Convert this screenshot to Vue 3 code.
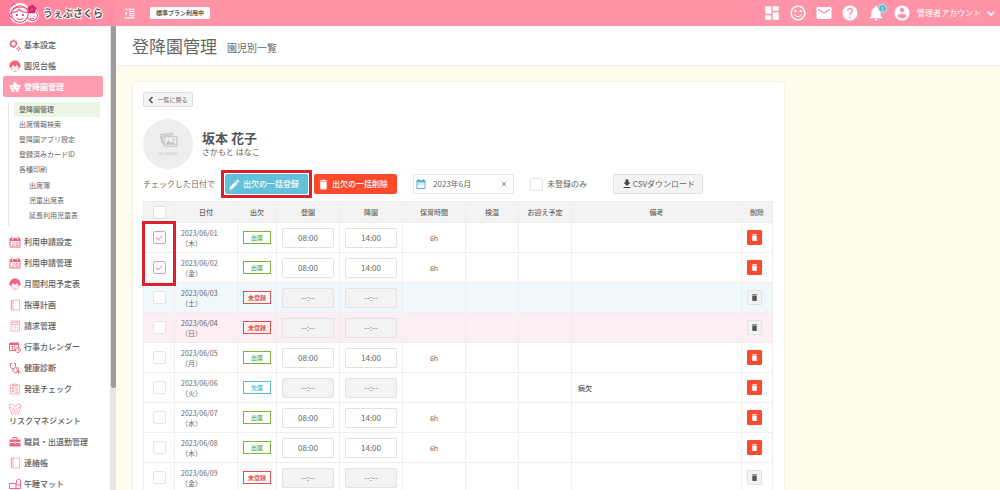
<script setup>
import { ref } from 'vue'

const mdi = {
  outdent: 'M11 17h10v-2H11v2zm-8-5l4 4V8l-4 4zm0 9h18v-2H3v2zM3 3v2h18V3H3zm8 6h10V7H11v2zm0 4h10v-2H11v2z',
  edit: 'M3 17.25V21h3.75L17.81 9.94l-3.75-3.75L3 17.25zM20.71 7.04c.39-.39.39-1.02 0-1.41l-2.34-2.34c-.39-.39-1.02-.39-1.41 0l-1.83 1.83 3.75 3.75 1.83-1.83z',
  trash: 'M6 19c0 1.1.9 2 2 2h8c1.1 0 2-.9 2-2V7H6v12zM19 4h-3.5l-1-1h-5l-1 1H5v2h14V4z',
  calendar: 'M9 11H7v2h2v-2zm4 0h-2v2h2v-2zm4 0h-2v2h2v-2zm2-7h-1V2h-2v2H8V2H6v2H5c-1.11 0-1.99.9-1.99 2L3 20c0 1.1.89 2 2 2h14c1.1 0 2-.9 2-2V6c0-1.1-.9-2-2-2zm0 16H5V9h14v11z',
  download: 'M19 9h-4V3H9v6H5l7 7 7-7zM5 18v2h14v-2H5z',
  account: 'M12 2C6.48 2 2 6.48 2 12s4.48 10 10 10 10-4.48 10-10S17.52 2 12 2zm0 3c1.66 0 3 1.34 3 3s-1.34 3-3 3-3-1.34-3-3 1.34-3 3-3zm0 14.2c-2.5 0-4.71-1.28-6-3.22.03-1.99 4-3.08 6-3.08 1.99 0 5.97 1.09 6 3.08-1.29 1.94-3.5 3.22-6 3.22z',
}

const actions = [
  { label: 'ダッシュボード', d: 'M3 13h8V3H3v10zm0 8h8v-6H3v6zm10 0h8V11h-8v10zm0-18v6h8V3h-8z' },
  { label: '園児', d: 'M11.99 2C6.47 2 2 6.48 2 12s4.47 10 9.99 10C17.52 22 22 17.52 22 12S17.52 2 11.99 2zM12 20c-4.42 0-8-3.58-8-8s3.58-8 8-8 8 3.58 8 8-3.58 8-8 8zm3.5-9c.83 0 1.5-.67 1.5-1.5S16.33 8 15.5 8 14 8.67 14 9.5s.67 1.5 1.5 1.5zm-7 0c.83 0 1.5-.67 1.5-1.5S9.33 8 8.5 8 7 8.67 7 9.5 7.67 11 8.5 11zm3.5 6.5c2.33 0 4.31-1.46 5.11-3.5H16c-.8 1.3-2.3 2.1-4 2.1S8.800 15.300 8 14H6.890c.8 2.040 2.780 3.500 5.110 3.500z' },
  { label: 'メール', d: 'M20 4H4c-1.1 0-1.99.9-1.99 2L2 18c0 1.1.9 2 2 2h16c1.1 0 2-.9 2-2V6c0-1.1-.9-2-2-2zm0 4l-8 5-8-5V6l8 5 8-5v2z' },
  { label: 'ヘルプ', d: 'M12 2C6.48 2 2 6.48 2 12s4.48 10 10 10 10-4.48 10-10S17.52 2 12 2zm1 17h-2v-2h2v2zm2.07-7.75l-.9.92C13.45 12.9 13 13.5 13 15h-2v-.5c0-1.1.45-2.1 1.17-2.83l1.24-1.26c.37-.36.59-.86.59-1.41 0-1.1-.9-2-2-2s-2 .9-2 2H8c0-2.21 1.790-4 4-4s4 1.790 4 4c0 .880-.360 1.680-.930 2.250z' },
  { label: 'お知らせ', badge: 1, d: 'M12 22c1.1 0 2-.9 2-2h-4c0 1.1.89 2 2 2zm6-6v-5c0-3.07-1.64-5.64-4.5-6.32V4c0-.83-.67-1.5-1.5-1.5s-1.5.67-1.5 1.5v.68C7.63 5.36 6 7.92 6 11v5l-2 2v1h16v-1l-2-2z' },
]

// fill: solid shapes, line: stroked shapes, cut: strokes in the background colour
const child = {
  fill: 'M1 14C0 6 6 1 12 1s12 5 11 13l-4 1-3-5-4 4-4-4-3 5z',
  thin: 'M4 14c0 5 4 9 8 9s8-4 8-9M8 16v2M16 16v2M10 20h4M2 12v4M22 12v4',
}
const calendar28 = {
  line: 'M2 5h20v17H2zM6 1v6M18 1v6',
  thin: 'M7 13h4v3H7v3h4M14 13h4v6h-4zM14 16h4',
  fill: 'M2 4h20v6H2z',
  cut: 'M7 4v3M17 4v3',
}
const notebook = { thin: 'M5 2h16v20H5zM8 2v20M3 5h3M3 9h3M3 13h3M3 17h3' }

const menuTop = [
  { label: '基本設定', icon: { bold: 'M9 4a5.500 5.500 0 1 0 .1 0M9 1v3M9 15v3M1 9.500h3M14 9.500h3M3 4l2 2M15 4l-2 2M3 15l2-2', line: 'M19 17a2.500 2.500 0 1 0 .1 0M19 15v2M19 22v2M15 19.500h2M21 19.500h2' } },
  { label: '園児台帳', icon: child },
  { label: '登降園管理', active: true, icon: { fill: 'M12 1l5 7h7l-3 5 1 3-3 1v5H5v-5l-3-1 1-3-3-5h7z', cut: 'M8 11v3M16 11v3M10 22v-4h4v4' } },
]
const submenu = ['登降園管理', '出席情報検索', '登降園アプリ設定', '登録済みカードID', '各種印刷']
const printMenu = ['出席簿', '児童出席表', '延長利用児童表']
const menuRest = [
  { label: '利用申請設定', icon: calendar28 },
  { label: '利用申請管理', icon: calendar28 },
  { label: '月間利用予定表', icon: child },
  { label: '指導計画', icon: notebook },
  { label: '請求管理', icon: { thin: 'M4 2h17v20H4zM7 5h11v4H7zM7 12h2M12 12h2M16 12h2M7 15h2M12 15h2M16 15h2M7 18h2M12 18h2M16 18h2' } },
  { label: '行事カレンダー', icon: { fill: 'M1 3h18v5H1z', line: 'M1 5h18v7M1 5v14h11M18 13a5 5 0 1 0 .1 0M18 15v3h3', thin: 'M4 11h11M4 15h8M7 8v11M11 8v11' } },
  { label: '健康診断', icon: { line: 'M3 3h3M10 3h3M3 3v6c0 6 10 6 10 0V3M8 13v4c0 6 9 6 9 0v-2M17 11a2 2 0 1 0 .1 0M15 20h8M19 16v7' } },
  { label: '発達チェック', icon: { thin: 'M3 4h18v18H3zM8 2h8v4H8zM6 9h3v3H6zM6 15h3v3H6zM12 10h6M12 13h6M12 16h6M12 19h6' } },
  { label: 'リスクマネジメント', stacked: true, icon: { thin: 'M1 3l5-1 6 5 6-5 5 1v9l-4 6v4H5v-4l-4-6zM1 8l11 6 11-6M5 18l4-4M19 18l-4-4M9 18h6' } },
  { label: '職員・出退勤管理', icon: { fill: 'M1 7h22v14H1z', line: 'M8 7V3h8v4', cut: 'M1 13h9M14 13h9M12 11v5' } },
  { label: '連絡帳', icon: notebook },
  { label: '午睡マット', icon: { line: 'M1 11h13v10H1zM14 21h9V6c0-5-8-5-8 0v5M15 14h8' } },
]

const P = '出席', U = '未登録', A = '欠席'
const rows = ref([
  { date: '2023/06/01', day: '木', status: P, checked: true },
  { date: '2023/06/02', day: '金', status: P, checked: true },
  { date: '2023/06/03', day: '土', status: U, tone: 'sat' },
  { date: '2023/06/04', day: '日', status: U, tone: 'sun' },
  { date: '2023/06/05', day: '月', status: P },
  { date: '2023/06/06', day: '火', status: A, note: '病欠' },
  { date: '2023/06/07', day: '水', status: P },
  { date: '2023/06/08', day: '木', status: P },
  { date: '2023/06/09', day: '金', status: U },
])
const statusClass = { [P]: 'present', [U]: 'missing', [A]: 'absent' }
const month = ref('2023年6月')
</script>

<template>
  <div class="app">
    <header class="topbar">
      <a class="brand" href="#">
        <svg class="mascot" viewBox="0 0 60 44" aria-hidden="true">
          <g fill="#fff" stroke="#fff" stroke-width="5"><circle cx="23" cy="22" r="18" /><circle cx="46" cy="26" r="11" /></g>
          <g fill="#fff" stroke="#e94f83" stroke-width="2">
            <circle cx="47" cy="26" r="10" />
            <circle cx="7" cy="25" r="4" />
            <circle cx="23" cy="23" r="16" />
            <path d="M7 20C10 8 36 4 39 20c-8 0-14-2-17-6-3 4-9 6-15 6z" fill="#fff0f4" />
            <path d="M15 6c-5-6-9-1-7 3M17 31c3 4 9 4 12 0M43 31c2 2 5 2 7 0" fill="none" />
          </g>
          <g fill="#d9286a">
            <circle cx="17" cy="25" r="2" /><circle cx="29" cy="25" r="2" /><circle cx="44" cy="27" r="1" /><circle cx="51" cy="27" r="1" />
            <circle cx="47" cy="9" r="4" /><circle cx="51" cy="13" r="4" /><circle cx="49" cy="18" r="4" /><circle cx="43" cy="18" r="4" /><circle cx="42" cy="12" r="4" />
          </g>
        </svg>
        <span>うぇぶさくら</span>
      </a>
      <button class="plain toggle" aria-label="メニューを閉じる"><svg viewBox="0 0 24 24"><path :d="mdi.outdent" /></svg></button>
      <span class="plan">標準プラン利用中</span>
      <nav class="actions">
        <button v-for="a in actions" :key="a.label" class="plain action" :aria-label="a.label">
          <svg viewBox="0 0 24 24"><path :d="a.d" /></svg>
          <span v-if="a.badge" class="badge">{{ a.badge }}</span>
        </button>
        <button class="plain account">
          <svg viewBox="0 0 24 24"><path :d="mdi.account" /></svg>
          <span>管理者アカウント</span>
          <svg class="chevron" viewBox="0 0 10 8"><path d="M1 2l4 4 4-4" /></svg>
        </button>
      </nav>
    </header>

    <div class="body">
      <aside class="sidebar">
        <nav class="menu">
          <a v-for="m in menuTop" :key="m.label" href="#" class="item" :class="{ active: m.active }">
            <svg class="glyph" viewBox="0 0 24 24">
              <path v-for="(d, kind) in m.icon" :key="kind" :class="kind" :d="d" />
            </svg>
            <span>{{ m.label }}</span>
          </a>
          <div class="submenu">
            <a v-for="(s, i) in submenu" :key="s" href="#" :class="{ current: i === 0 }">{{ s }}</a>
            <div class="nested"><a v-for="s in printMenu" :key="s" href="#">{{ s }}</a></div>
          </div>
          <a v-for="m in menuRest" :key="m.label" href="#" class="item" :class="{ stacked: m.stacked }">
            <svg class="glyph" viewBox="0 0 24 24">
              <path v-for="(d, kind) in m.icon" :key="kind" :class="kind" :d="d" />
            </svg>
            <span>{{ m.label }}</span>
          </a>
        </nav>
        <div class="track"><div class="thumb"></div></div>
      </aside>

      <main>
        <div class="heading">
          <h1>登降園管理</h1>
          <p>園児別一覧</p>
        </div>
        <section class="card">
          <button class="grey back">
            <svg viewBox="0 0 8 10"><path d="M6 1L2 5l4 4" /></svg>一覧に戻る
          </button>
          <div class="profile">
            <div class="avatar">
              <svg viewBox="0 0 36 30" aria-hidden="true">
                <path d="M6 21L2 5l23-3 1 3M9 24L5 8l23-3" />
                <path d="M10 9h24v18H10z" />
                <path class="solid" d="M12 24l6-9 5 6 3-4 6 7z" /><circle class="solid" cx="28" cy="14" r="2" />
              </svg>
              <span>NO IMAGE</span>
            </div>
            <div>
              <h2>坂本 花子</h2>
              <p>さかもと はなこ</p>
            </div>
          </div>

          <div class="toolbar">
            <span class="lead">チェックした日付で</span>
            <div class="highlight">
              <button class="solid-btn blue"><svg viewBox="0 0 24 24"><path :d="mdi.edit" /></svg>出欠の一括登録</button>
            </div>
            <button class="solid-btn red"><svg viewBox="0 0 24 24"><path :d="mdi.trash" /></svg>出欠の一括削除</button>
            <div class="month">
              <svg viewBox="0 0 24 24"><path :d="mdi.calendar" /></svg>
              <input v-model="month" type="text" aria-label="対象月" />
              <button class="plain clear" aria-label="クリア" @click="month = ''"><svg viewBox="0 0 8 8"><path d="M1 1l6 6M7 1L1 7" /></svg></button>
            </div>
            <label class="only"><input type="checkbox" />未登録のみ</label>
            <button class="grey csv"><svg viewBox="0 0 24 24"><path :d="mdi.download" /></svg>CSVダウンロード</button>
          </div>

          <table>
            <colgroup>
              <col class="c-check" /><col class="c-time" /><col class="c-status" /><col class="c-time" /><col class="c-time" />
              <col class="c-time" /><col class="c-mid" /><col class="c-mid" /><col /><col class="c-check" />
            </colgroup>
            <thead>
              <tr>
                <th><input type="checkbox" aria-label="すべて選択" /></th>
                <th>日付</th><th>出欠</th><th>登園</th><th>降園</th><th>保育時間</th><th>検温</th><th>お迎え予定</th><th>備考</th><th>削除</th>
              </tr>
            </thead>
            <tbody>
              <tr v-for="(r, i) in rows" :key="r.date" :class="r.tone">
                <td class="check">
                  <input v-model="r.checked" type="checkbox" :aria-label="r.date" />
                  <span v-if="i === 0" class="marker"></span>
                </td>
                <td class="date">{{ r.date }}<br />（{{ r.day }}）</td>
                <td><span class="status" :class="statusClass[r.status]">{{ r.status }}</span></td>
                <td><input class="time" type="text" :value="r.status === P ? '08:00' : '--:--'" :disabled="r.status !== P" :aria-label="r.date + ' 登園'" /></td>
                <td><input class="time" type="text" :value="r.status === P ? '14:00' : '--:--'" :disabled="r.status !== P" :aria-label="r.date + ' 降園'" /></td>
                <td>{{ r.status === P ? '6h' : '' }}</td>
                <td></td>
                <td></td>
                <td class="note">{{ r.note }}</td>
                <td class="del">
                  <button :class="{ off: r.status === U }" :aria-label="r.date + ' 削除'"><svg viewBox="0 0 24 24"><path :d="mdi.trash" /></svg></button>
                </td>
              </tr>
            </tbody>
          </table>
        </section>
      </main>
    </div>
  </div>
</template>

<style>
body { margin: 0; overflow: hidden; }
</style>

<style scoped>
* { box-sizing: border-box; }
.app {
  height: 100vh;
  display: flex;
  flex-direction: column;
  overflow: hidden;
  background: #fffcee;
  color: #666;
  font: 8px/12px "Noto Sans CJK JP", "Noto Sans", sans-serif;
}
button, input { font: inherit; color: inherit; margin: 0; }
button { cursor: pointer; padding: 0; }
a { color: inherit; text-decoration: none; }
h1, h2, p { margin: 0; }
svg { display: block; flex: none; fill: currentColor; }
.plain { border: 0; background: none; display: flex; align-items: center; }

.topbar { height: 26px; flex: none; display: flex; align-items: center; background: #ff94a8; color: #fff; }
.brand {
  width: 116px;
  height: 100%;
  padding-left: 8px;
  display: flex;
  align-items: center;
  gap: 4px;
  background: linear-gradient(90deg, #ff7f9a, #ff8fa4);
  color: #555;
  font-size: 10px;
  font-weight: 700;
  text-shadow: 1px 0 #fff, -1px 0 #fff, 0 1px #fff, 0 -1px #fff, 1px 1px #fff, -1px -1px #fff;
}
.mascot { width: 31px; height: 23px; }
.toggle { margin-left: 7px; }
.toggle svg { width: 13px; height: 13px; }
.plan { margin-left: 14px; padding: 0 6px; border-radius: 2px; background: #fff; color: #555; font-size: 6px; font-weight: 700; min-width: 60px; text-align: center; }
.actions { margin-left: auto; padding-right: 5px; display: flex; align-items: center; gap: 8px; }
.actions svg { width: 18px; height: 18px; }
.action { position: relative; }
.badge {
  position: absolute;
  right: -2px;
  top: 0;
  width: 9px;
  height: 9px;
  border: 1px solid #d9eef2;
  border-radius: 50%;
  background: #4dbcd0;
  font-size: 5px;
  line-height: 7px;
  text-align: center;
}
.account { gap: 6px; }
.actions .chevron { width: 8px; height: 7px; fill: none; stroke: currentColor; stroke-width: 2; }

.body { flex: 1; min-height: 0; display: flex; }
.sidebar { width: 116px; flex: none; display: flex; background: #fff; overflow: hidden; }
.menu { flex: 1; padding: 8px 0 0 3px; }
.item { height: 21px; margin-right: 7px; padding-left: 6px; display: flex; align-items: center; gap: 3px; border-radius: 2px; color: #5c5c5c; white-space: nowrap; font-weight: 500; }
.item.active { background: #ff9bae; color: #fff; font-weight: 700; }
.item.stacked { height: 32px; flex-direction: column; align-items: flex-start; justify-content: center; gap: 0; }
.glyph { width: 12px; height: 12px; color: #f0647e; fill: none; }
.active .glyph { color: #fff; }
.glyph .fill { fill: currentColor; }
.glyph .line, .glyph .bold, .glyph .thin { stroke: currentColor; stroke-width: 2; }
.glyph .bold { stroke-width: 3; }
.glyph .thin { stroke-width: 1; }
.glyph .cut { stroke: #fff; stroke-width: 2; }
.active .glyph .cut { stroke: #ff9bae; }
.submenu { margin: 5px 10px 5px 5px; border-left: 1px solid #e6e6e6; padding: 0 0 3px 5px; font-size: 7px; line-height: 15px; }
.submenu a { display: block; padding-left: 5px; white-space: nowrap; }
.submenu .current { background: #edf5e4; font-weight: 500; }
.nested { margin-top: 1px; padding-left: 10px; }
.track { width: 6px; background: #e6e6e6; }
.thumb { width: 5px; height: 78%; margin-left: 1px; border-radius: 0 0 3px 3px; background: #9c9c9c; }

main { flex: 1; min-width: 0; }
.heading { height: 40px; padding: 0 16px; display: flex; align-items: center; gap: 10px; background: #fff; border-bottom: 1px solid #eee; }
.heading h1 { font-size: 17px; line-height: 24px; font-weight: 400; }
.heading p { font-size: 10px; line-height: 16px; padding-top: 4px; }
.card { max-width: 653px; margin: 15px 16px 0; padding: 10px 11px 0 10px; border: 1px solid #f5f2e6; border-radius: 3px 3px 0 0; background: #fff; }
.grey { display: flex; align-items: center; justify-content: center; border: 1px solid #ddd; border-radius: 2px; background: #f4f4f4; }
.back { height: 15px; width: 50px; gap: 3px; font-size: 6px; }
.back svg { width: 6px; height: 8px; fill: none; stroke: #555; stroke-width: 2; }
.profile { margin-top: 12px; display: flex; align-items: center; gap: 9px; }
.profile h2 { font-size: 13px; line-height: 16px; color: #555; }
.avatar { width: 50px; height: 50px; border-radius: 50%; background: #eee; color: #c4c4c4; display: flex; flex-direction: column; align-items: center; justify-content: center; font-size: 4px; line-height: 6px; gap: 2px; }
.avatar svg { width: 19px; height: 16px; fill: none; stroke: currentColor; stroke-width: 2; }
.avatar .solid { fill: currentColor; stroke: none; }

.toolbar { margin: 5px 0 7px; height: 20px; display: flex; align-items: stretch; }
.lead { width: 82px; align-self: center; white-space: nowrap; }
.highlight { display: flex; margin-right: 6px; outline: 3px solid #d8232e; outline-offset: 1px; }
.solid-btn { width: 83px; padding-left: 3px; border: 0; border-radius: 2px; display: flex; align-items: center; gap: 2px; color: #fff; font-weight: 500; white-space: nowrap; }
.solid-btn svg { width: 13px; height: 13px; }
.blue { background: #62c1da; }
.red { background: #fc4a2b; }
.month { margin-left: 16px; width: 101px; padding: 0 6px 0 1px; display: flex; align-items: center; border: 1px solid #e4e4e4; border-radius: 2px; }
.month > svg { width: 12px; height: 12px; color: #4fb9c9; }
.month input { flex: 1; min-width: 0; margin-left: 6px; padding: 0; border: 0; outline: 0; background: none; }
.clear svg { width: 6px; height: 6px; stroke: #555; stroke-width: 1; }
.only { margin-left: 16px; display: flex; align-items: center; gap: 4px; }
.csv { margin-left: auto; margin-right: 70px; width: 90px; border-color: #e2e2e2; white-space: nowrap; }
.csv svg { width: 12px; height: 12px; color: #444; }

input[type="checkbox"] {
  appearance: none;
  width: 13px;
  height: 13px;
  border: 1px solid #e4e4e4;
  border-radius: 2px;
  background: #fff;
  display: inline-grid;
  place-items: center;
  vertical-align: middle;
}
input[type="checkbox"]:checked { border-color: #dd9dbb; }
input[type="checkbox"]:checked::before {
  content: "";
  width: 5px;
  height: 3px;
  margin-bottom: 2px;
  border: solid #dd9dbb;
  border-width: 0 0 1px 1px;
  transform: rotate(-45deg);
}

table { width: 100%; table-layout: fixed; border-collapse: collapse; font-size: 7px; line-height: 10px; text-align: center; }
.c-check { width: 31px; }
.c-time { width: 63px; }
.c-status { width: 39px; }
.c-mid { width: 53px; }
th, td { padding: 0; border: 1px solid #eee; }
th { height: 21px; background: #f3f3f3; font-weight: 500; }
td { height: 30px; }
.sat { background: #eff8fb; }
.sun { background: #fdeef1; }
.check { position: relative; }
.marker { position: absolute; z-index: 1; left: -2px; top: -2px; width: 34px; height: 65px; border: 3px solid #d8232e; pointer-events: none; }
.date { text-align: left; padding-left: 6px; }
.status { display: block; width: 28px; height: 13px; margin: 0 auto; border: 1px solid; font-size: 6px; line-height: 11px; font-weight: 700; }
.present { color: #7cb342; }
.missing { color: #e2504e; }
.absent { color: #62b9d4; }
.time { display: block; width: 52px; height: 20px; margin: 0 auto; padding: 0; border: 1px solid #e2e2e2; border-radius: 2px; background: #fff; font-size: 8px; text-align: center; }
.time:disabled { background: #f3f3f3; color: #777; }
.note { text-align: left; padding-left: 6px; color: #444; font-weight: 500; }
.del button { width: 15px; height: 15px; margin-left: 5px; display: flex; align-items: center; justify-content: center; border: 1px solid #fa4a30; border-radius: 1px; background: #fa4a30; color: #fff; }
.del svg { width: 9px; height: 9px; }
.del .off { background: #f3f3f3; border-color: #e2e2e2; color: #555; }
</style>
